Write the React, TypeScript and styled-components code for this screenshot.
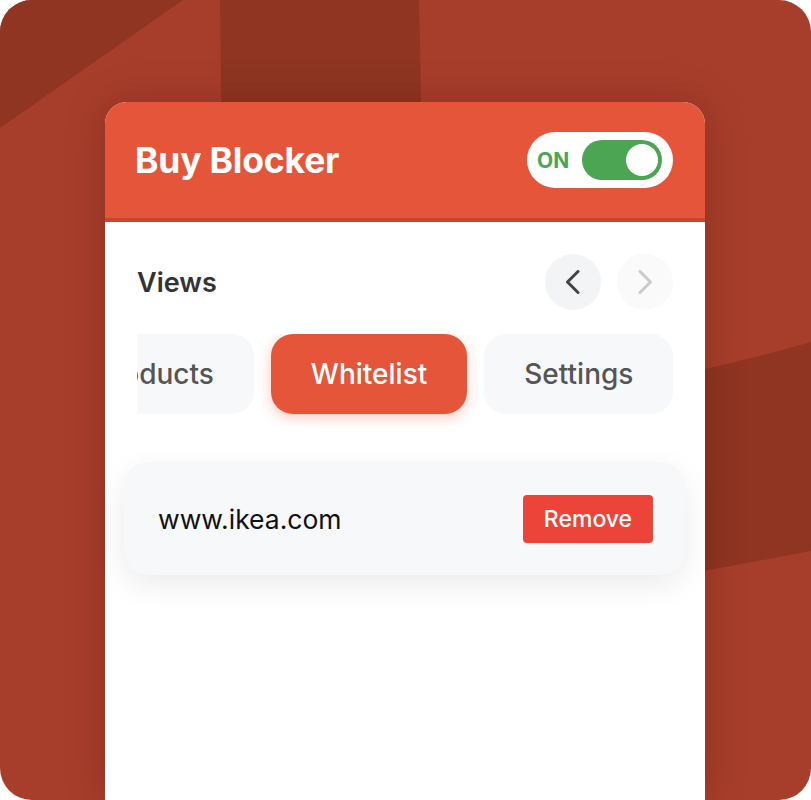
import React, { useLayoutEffect, useRef, useState } from "react";
import styled, { createGlobalStyle } from "styled-components";

const Global = createGlobalStyle`
  html, body { margin: 0; padding: 0; background: #ffffff; }
  * { box-sizing: border-box; }
  body { font-family: Inter, "Noto Sans", sans-serif; }
`;

const Frame = styled.div`
  position: relative;
  width: 811px;
  height: 800px;
  border-radius: 32px;
  overflow: hidden;
  background: #a73e2b;
  display: flex;
  justify-content: flex-start;
  padding: 102px 0 0 105px;
`;

const Decor = styled.svg`
  position: absolute;
  inset: 0;
  width: 811px;
  height: 800px;
  z-index: 0;
`;

const Card = styled.div`
  position: relative;
  z-index: 1;
  width: 600px;
  height: 698px;
  background: #ffffff;
  border-radius: 22px 22px 0 0;
  box-shadow: 0 0 40px rgba(60, 10, 0, 0.22);
  display: flex;
  flex-direction: column;
`;

const Header = styled.header`
  height: 120px;
  background: #e4553a;
  border-bottom: 4px solid #c9452f;
  border-radius: 22px 22px 0 0;
  padding: 0 32px 0 30px;
  display: flex;
  align-items: center;
  justify-content: space-between;
`;

const Title = styled.h1`
  margin: 0;
  color: #ffffff;
  font-size: 35.5px;
  font-weight: 700;
  letter-spacing: -0.2px;
`;

const TogglePill = styled.div`
  width: 146px;
  height: 56px;
  border-radius: 28px;
  background: #ffffff;
  display: flex;
  align-items: center;
  justify-content: space-between;
  padding: 0 11px 0 10px;
`;

const ToggleLabel = styled.span`
  color: #4ca553;
  font-size: 21px;
  font-weight: 700;
`;

const Track = styled.div<{ $on: boolean }>`
  width: 80px;
  height: 40px;
  border-radius: 20px;
  background: ${(p) => (p.$on ? "#4ca553" : "#cccccc")};
  display: flex;
  align-items: center;
  justify-content: ${(p) => (p.$on ? "flex-end" : "flex-start")};
  padding: 0 4px;
`;

const Knob = styled.div`
  width: 32px;
  height: 32px;
  border-radius: 50%;
  background: #ffffff;
`;

const Body = styled.main`
  padding: 32px 32px;
  display: flex;
  flex-direction: column;
`;

const ViewsRow = styled.div`
  height: 56px;
  display: flex;
  align-items: center;
  justify-content: space-between;
`;

const ViewsTitle = styled.h2`
  margin: 0;
  font-size: 27px;
  font-weight: 600;
  color: #333333;
`;

const NavGroup = styled.div`
  display: flex;
  gap: 16px;
`;

const NavButton = styled.button<{ $disabled?: boolean }>`
  width: 56px;
  height: 56px;
  border-radius: 50%;
  border: none;
  padding: 0;
  display: flex;
  align-items: center;
  justify-content: center;
  background: ${(p) => (p.$disabled ? "#fafafb" : "#f3f4f6")};
  color: ${(p) => (p.$disabled ? "#cacaca" : "#444444")};
`;

const TabViewport = styled.div`
  margin-top: 24px;
  overflow: hidden;
  padding: 0 0 12px;
  margin-bottom: -12px;
`;

const TabTrack = styled.div`
  display: flex;
  gap: 17px;
`;

const Tab = styled.div<{ $active?: boolean }>`
  flex: none;
  height: 80px;
  padding: 0 40px;
  border-radius: 22px;
  display: flex;
  align-items: center;
  font-size: 28px;
  font-weight: 500;
  background: ${(p) => (p.$active ? "#e4553a" : "#f7f8fa")};
  color: ${(p) => (p.$active ? "#ffffff" : "#555555")};
  box-shadow: ${(p) => (p.$active ? "0 4px 14px rgba(228, 85, 58, 0.3)" : "none")};
`;

const List = styled.div`
  margin: 48px -12px 0 -13px;
  display: flex;
  flex-direction: column;
  gap: 16px;
`;

const Item = styled.div`
  height: 113px;
  background: #f7f8fa;
  border-radius: 24px;
  box-shadow: 0 10px 30px rgba(0, 0, 0, 0.08);
  display: flex;
  align-items: center;
  justify-content: space-between;
  padding: 0 32px 0 34px;
`;

const Domain = styled.span`
  font-size: 26.5px;
  color: #111111;
`;

const RemoveButton = styled.button`
  width: 130px;
  height: 48px;
  border: none;
  border-radius: 4px;
  background: #ec4439;
  color: #ffffff;
  font-family: Inter, "Noto Sans", sans-serif;
  font-size: 23px;
  font-weight: 500;
`;

const Chevron = ({ dir }: { dir: "left" | "right" }) => (
  <svg width="14" height="24" viewBox="0 0 14 24" fill="none">
    <polyline
      points={dir === "left" ? "12,1.5 1.5,12 12,22.5" : "2,1.5 12.5,12 2,22.5"}
      stroke="currentColor"
      strokeWidth="3"
      strokeLinecap="round"
      strokeLinejoin="round"
    />
  </svg>
);

export default function App() {
  const firstTab = useRef<HTMLDivElement>(null);
  const [offset, setOffset] = useState(0);

  useLayoutEffect(() => {
    if (firstTab.current) {
      // scroll so the first tab shows its last 117px
      setOffset(firstTab.current.offsetWidth - 117);
    }
  }, []);

  return (
    <>
      <Global />
      <Frame>
        <Decor viewBox="0 0 811 800">
          <path d="M0 0 H183 L0 128 Z" fill="#8f3522" />
          <path d="M220 0 H419 Q421 80 424 300 H224 Q221 80 220 0 Z" fill="#8f3522" />
          <path d="M600 390 Q705 372 811 342 V551 Q705 571 600 590 Z" fill="#8f3522" />
        </Decor>
        <Card>
          <Header>
            <Title>Buy Blocker</Title>
            <TogglePill>
              <ToggleLabel>ON</ToggleLabel>
              <Track $on>
                <Knob />
              </Track>
            </TogglePill>
          </Header>
          <Body>
            <ViewsRow>
              <ViewsTitle>Views</ViewsTitle>
              <NavGroup>
                <NavButton aria-label="Previous">
                  <Chevron dir="left" />
                </NavButton>
                <NavButton $disabled aria-label="Next">
                  <Chevron dir="right" />
                </NavButton>
              </NavGroup>
            </ViewsRow>
            <TabViewport>
              <TabTrack style={{ transform: `translateX(${-offset}px)` }}>
                <Tab ref={firstTab}>Products</Tab>
                <Tab $active>Whitelist</Tab>
                <Tab>Settings</Tab>
              </TabTrack>
            </TabViewport>
            <List>
              <Item>
                <Domain>www.ikea.com</Domain>
                <RemoveButton>Remove</RemoveButton>
              </Item>
            </List>
          </Body>
        </Card>
      </Frame>
    </>
  );
}
